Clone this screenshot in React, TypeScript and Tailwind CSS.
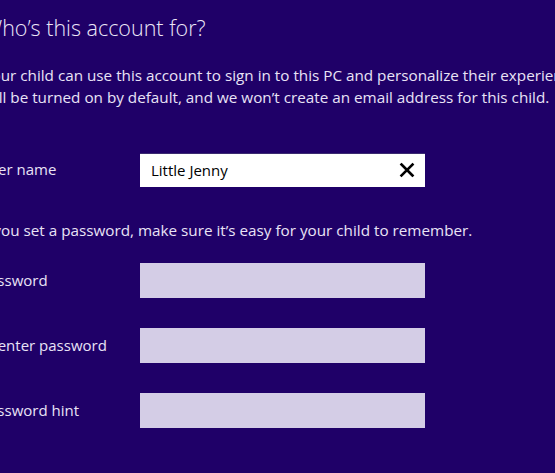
import React from "react";

function Field({ label, value, white }: { label: string; value?: string; white?: boolean }) {
  return (
    <div className="flex items-center h-[35px]">
      <div className="w-[157px] ml-[-3px] pl-0 text-[15px] text-[#e9e3f6] shrink-0 whitespace-nowrap">
        <span>{label}</span>
      </div>
      <div className="ml-[3px]">
        {white ? (
          <div className="w-[285px] h-[34px] bg-white border-t border-[#3a2a70] flex items-center justify-between pl-[11px] pr-[10px]">
            <span className="text-[15px] text-black">{value}</span>
            <svg width="16" height="16" viewBox="0 0 16 16">
              <path d="M2.5 2.5 L13.5 13.5 M13.5 2.5 L2.5 13.5" stroke="#000" strokeWidth="2.6" strokeLinecap="square" />
            </svg>
          </div>
        ) : (
          <div className="w-[285px] h-[35px] bg-[#d4cde6]" />
        )}
      </div>
    </div>
  );
}

export default function App() {
  return (
    <div
      className="w-[555px] h-[473px] bg-[#1f0068] overflow-hidden"
      style={{ fontFamily: '"Open Sans", "Noto Sans", sans-serif' }}
    >
      <div className="ml-[-17px] w-[700px]">
        <h1 className="pt-[14px] text-[21.5px] font-light leading-[28px] text-[#ece7f8] whitespace-nowrap">
          Who’s this account for?
        </h1>
        <p className="mt-[22px] text-[15.25px] leading-[22px] text-[#e9e3f6] whitespace-nowrap">
          Your child can use this account to sign in to this PC and personalize their experience. It
          <br />
          will be turned on by default, and we won’t create an email address for this child.
        </p>
        <div className="mt-[44px]">
          <Field label="User name" value="Little Jenny" white />
        </div>
        <p className="mt-[32px] ml-[-3px] text-[15.25px] leading-[22px] text-[#e9e3f6] whitespace-nowrap">
          If you set a password, make sure it’s easy for your child to remember.
        </p>
        <div className="mt-[22px] flex flex-col gap-[30px]">
          <Field label="Password" />
          <Field label="Reenter password" />
          <Field label="Password hint" />
        </div>
      </div>
    </div>
  );
}
